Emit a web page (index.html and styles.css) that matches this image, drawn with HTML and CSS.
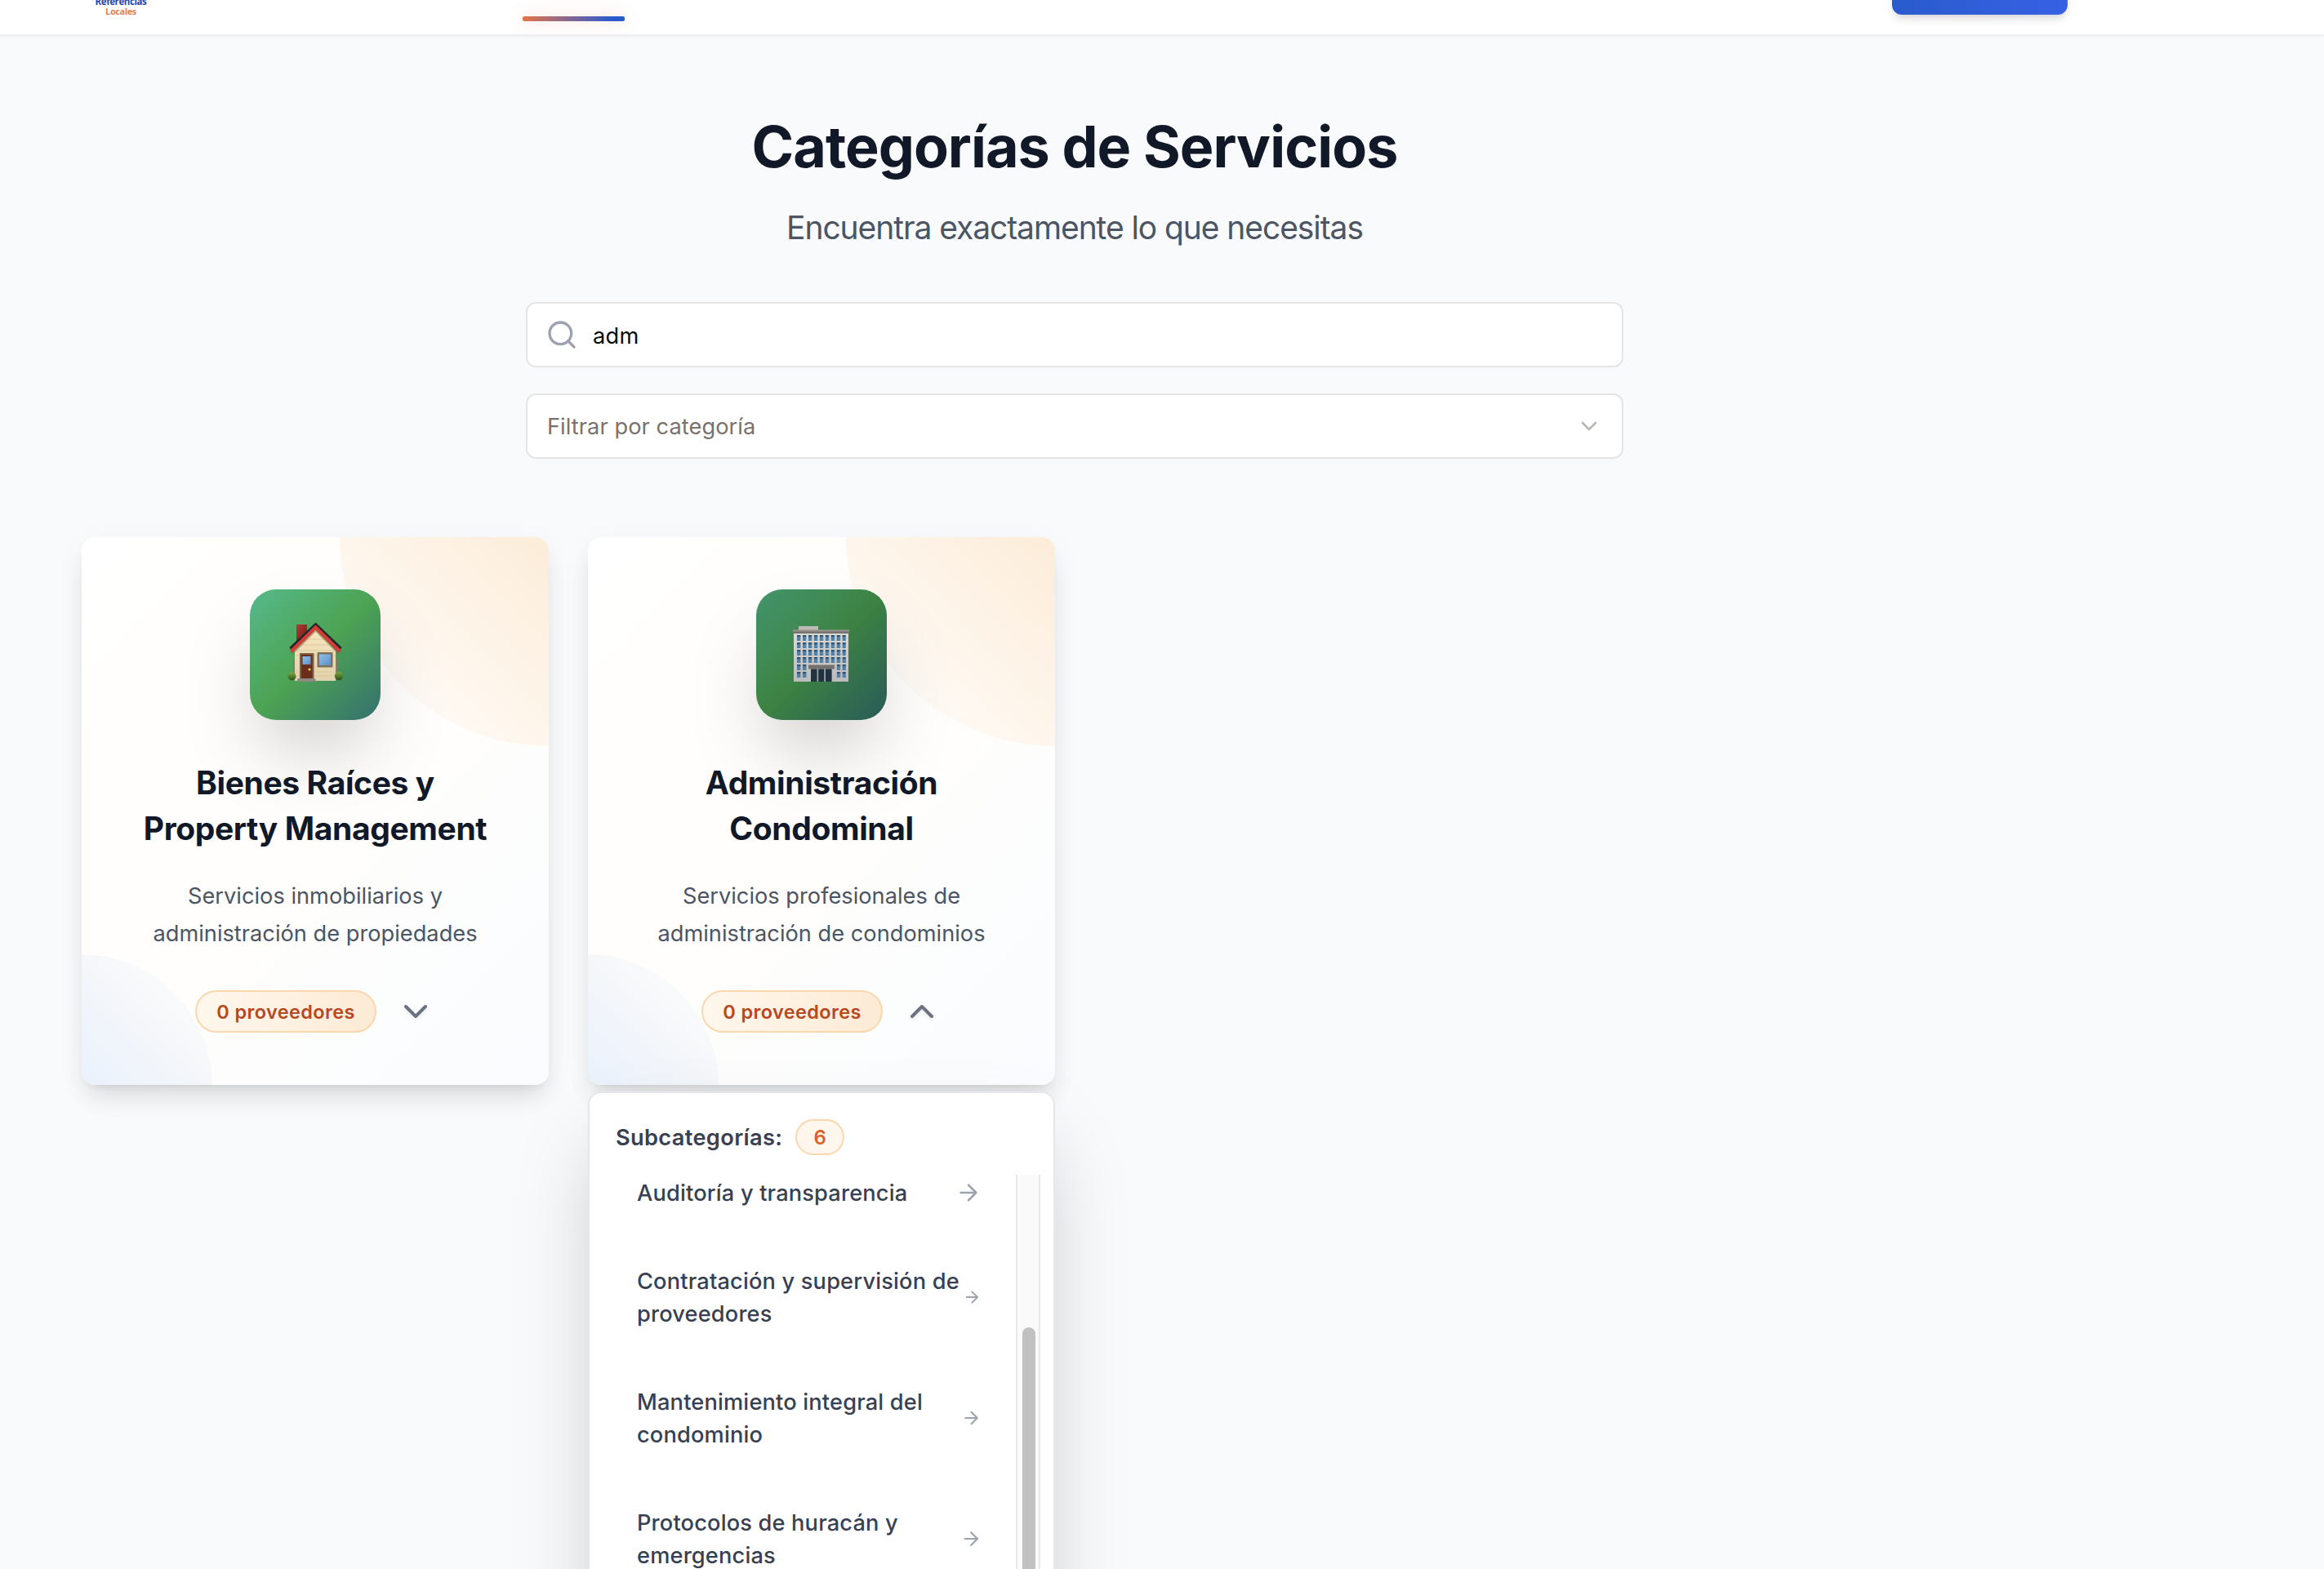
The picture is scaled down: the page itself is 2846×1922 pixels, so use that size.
FILE: index.html
```html
<!DOCTYPE html>
<html lang="es">
<head>
<meta charset="utf-8">
<title>Categorías de Servicios</title>
<link rel="stylesheet" href="styles.css">
</head>
<body>
<header class="topbar">
  <div class="logo"><span class="logo-main">Referencias</span><span class="logo-sub">Locales</span></div>
  <div class="nav-active"></div>
  <div class="cta"></div>
</header>
<main class="page">
  <h1 class="title">Categorías de Servicios</h1>
  <p class="subtitle">Encuentra exactamente lo que necesitas</p>
  <div class="filters">
    <div class="field">
      <svg class="search-icon" viewBox="0 0 24 24"><circle cx="11" cy="11" r="8"/><path d="m21 21-4.3-4.3"/></svg>
      <span class="query">adm</span>
    </div>
    <div class="field">
      <span class="placeholder">Filtrar por categoría</span>
      <svg class="select-icon" viewBox="0 0 24 24"><path d="m6 9 6 6 6-6"/></svg>
    </div>
  </div>
  <div class="grid">
    <article class="card">
      <div class="tile tile-light">
        <svg class="emoji" viewBox="0 0 72 72">
          <defs>
            <linearGradient id="wall" x1="0" y1="0" x2="0" y2="1"><stop offset="0" stop-color="#f8e6bd"/><stop offset="1" stop-color="#e0d2ae"/></linearGradient>
            <linearGradient id="brick" x1="0" y1="0" x2="1" y2="1"><stop offset="0" stop-color="#b03c32"/><stop offset="1" stop-color="#6e1c18"/></linearGradient>
            <linearGradient id="leaf" x1="0" y1="0" x2="0" y2="1"><stop offset="0" stop-color="#7fa83f"/><stop offset="1" stop-color="#2c5218"/></linearGradient>
            <linearGradient id="pane" x1="0" y1="0" x2="1" y2="1"><stop offset="0" stop-color="#8fc0ea"/><stop offset="1" stop-color="#5f8fc4"/></linearGradient>
          </defs>
          <rect x="13" y="2" width="13" height="21" rx="1" fill="url(#brick)"/>
          <rect x="9" y="44" width="3" height="18" fill="#8b7d63"/><rect x="60" y="44" width="3" height="18" fill="#8b7d63"/>
          <path d="M11 34 36 8l25 26v37H11z" fill="url(#wall)"/>
          <path d="M26 20h20M20 27h32M13 34h46M11 40h50M11 60h50M11 65h50" stroke="#d8c498" stroke-width=".8"/>
          <path d="m7 34 29.500-29.500L66 34" fill="none" stroke="#7d6b54" stroke-width="4" transform="translate(0 3.500)" opacity=".55"/>
          <path d="m6 32 30.500-29L67 32" fill="none" stroke="#20262b" stroke-width="5"/>
          <path d="m6.500 35 30-29.500L66.500 35" fill="none" stroke="#cf3f35" stroke-width="4.400"/>
          <rect x="17" y="37" width="17.500" height="32" fill="#7d6048"/><rect x="19" y="39" width="13.500" height="29" fill="#6b2e1d"/>
          <rect x="20.500" y="41" width="10" height="10" fill="url(#pane)"/><circle cx="29" cy="57" r="1.500" fill="#f2cf4f"/>
          <rect x="38.500" y="36" width="19" height="18.500" fill="#7f7058"/><rect x="41" y="38.500" width="14" height="13.500" fill="url(#pane)"/>
          <circle cx="7.500" cy="65.500" r="5" fill="url(#leaf)"/><circle cx="65" cy="65" r="5.200" fill="url(#leaf)"/>
          <path d="M15 68h20.500l2 4H13z" fill="#8d8985"/>
        </svg>
      </div>
      <h2 class="card-title">Bienes Raíces y<br>Property Management</h2>
      <p class="card-text">Servicios inmobiliarios y<br>administración de propiedades</p>
      <div class="card-foot"><span class="badge">0 proveedores</span>
        <svg class="chevron" viewBox="0 0 24 24"><path d="m6 9 6 6 6-6"/></svg></div>
    </article>
    <div class="column">
      <article class="card">
        <div class="tile tile-dark">
          <svg class="emoji" viewBox="0 0 72 72">
            <defs>
              <linearGradient id="stone" x1="0" y1="0" x2="0" y2="1"><stop offset="0" stop-color="#dddbd8"/><stop offset="1" stop-color="#b9bbbd"/></linearGradient>
              <linearGradient id="glass" x1="0" y1="0" x2="0" y2="1"><stop offset="0" stop-color="#23435f"/><stop offset=".5" stop-color="#5583a8"/><stop offset="1" stop-color="#4f7a9d"/></linearGradient>
              <linearGradient id="cornice" x1="0" y1="0" x2="0" y2="1"><stop offset="0" stop-color="#a09b96"/><stop offset="1" stop-color="#6b6560"/></linearGradient>
              <pattern id="windows" x="6" y="14" width="6.950" height="9" patternUnits="userSpaceOnUse"><rect width="4.400" height="7" fill="url(#glass)"/></pattern>
            </defs>
            <rect x="8" y="3" width="24" height="6" fill="#bdb9b5"/>
            <rect x="2" y="9" width="67" height="62" fill="url(#stone)"/>
            <rect x="1" y="7.500" width="69" height="4.500" fill="url(#cornice)"/>
            <rect x="6" y="14" width="60" height="35.500" fill="url(#windows)"/>
            <rect x="6" y="50" width="12" height="17" fill="url(#windows)"/><rect x="54.600" y="50" width="11.500" height="17" fill="url(#windows)"/>
            <rect x="20" y="50.500" width="32" height="5" fill="#77716c"/>
            <rect x="23" y="55.500" width="26" height="15.500" fill="#9ca4a8"/>
            <path d="M23 55.500h7.500V71H23zM32.200 55.500h7V71h-7zM41 55.500h7.500V71H41z" fill="#22323e"/>
          </svg>
        </div>
        <h2 class="card-title">Administración<br>Condominal</h2>
        <p class="card-text">Servicios profesionales de<br>administración de condominios</p>
        <div class="card-foot"><span class="badge">0 proveedores</span>
          <svg class="chevron" viewBox="0 0 24 24"><path d="m6 15 6-6 6 6"/></svg></div>
      </article>
      <section class="dropdown">
        <div class="drop-head"><span class="drop-title">Subcategorías:</span><span class="count">6</span></div>
        <div class="drop-body">
          <ul class="items">
            <li class="item single"><span>Auditoría y transparencia</span><svg class="arrow" viewBox="0 0 24 24"><path d="M5 12h14M12 5l7 7-7 7"/></svg></li>
            <li class="item"><span>Contratación y supervisión de<br>proveedores</span><svg class="arrow arrow-s" viewBox="0 0 24 24"><path d="M5 12h14M12 5l7 7-7 7"/></svg></li>
            <li class="item"><span>Mantenimiento integral del<br>condominio</span><svg class="arrow arrow-m" viewBox="0 0 24 24"><path d="M5 12h14M12 5l7 7-7 7"/></svg></li>
            <li class="item"><span>Protocolos de huracán y<br>emergencias</span><svg class="arrow arrow-l" viewBox="0 0 24 24"><path d="M5 12h14M12 5l7 7-7 7"/></svg></li>
          </ul>
          <div class="track"><div class="thumb"></div></div>
        </div>
      </section>
    </div>
  </div>
</main>
</body>
</html>
```
FILE: styles.css
```css
* { box-sizing: border-box; margin: 0; padding: 0; }
body {
  height: 1922px;
  overflow: hidden;
  display: flex;
  flex-direction: column;
  background: #f9fafc;
  color: #111827;
  font-family: Inter, "Liberation Sans", sans-serif;
}
svg { display: block; flex: none; fill: none; stroke-linecap: round; stroke-linejoin: round; }

.topbar {
  flex: none;
  height: 42px;
  display: flex;
  align-items: flex-end;
  padding: 0 314px 0 100px;
  background: #fff;
  box-shadow: 0 2px 0 #eff0f2, 0 2px 6px rgba(0, 0, 0, .06);
}
.logo {
  width: 96px;
  display: flex;
  flex-direction: column;
  align-items: center;
  margin-bottom: 22px;
  font: 700 11.500px/12px "Open Sans", sans-serif;
  letter-spacing: -.4px;
}
.logo-main { color: #2746ae; }
.logo-sub { color: #e0824f; font-size: 11px; }
.nav-active {
  width: 125px;
  height: 6px;
  margin: 0 auto 16px 444px;
  border-radius: 2px;
  background: linear-gradient(90deg, #e5744a, #2a5bcd 88%);
  box-shadow: 0 0 20px rgba(229, 92, 60, .25);
}
.cta {
  width: 215px;
  height: 80px;
  margin-bottom: 24px;
  border-radius: 12px;
  background: linear-gradient(90deg, #2a5bcd, #3761e4);
  box-shadow: 0 8px 12px -2px rgba(0, 0, 0, .1), 0 4px 8px -4px rgba(0, 0, 0, .12);
}

.page {
  flex: 1;
  min-height: 0;
  overflow: hidden;
  display: flex;
  flex-direction: column;
  margin-top: 2px;
  padding: 96px 314px 0 100px;
  white-space: nowrap;
}
.title { font-size: 70px; line-height: 80px; font-weight: 700; letter-spacing: -.97px; text-align: center; }
.subtitle { margin-top: 31px; font-size: 39px; line-height: 56px; color: #4b5563; letter-spacing: -1.080px; text-align: center; }
.filters { width: 1344px; margin: 63px auto 0; display: flex; flex-direction: column; gap: 32px; }
.field {
  height: 80px;
  flex: none;
  display: flex;
  align-items: center;
  padding: 0 24px;
  border: 2px solid #e7e5e4;
  border-radius: 12px;
  background: #fff;
  font-size: 27.200px;
}
.search-icon { width: 40px; height: 40px; margin: 0 18px 0 -2px; stroke: #9ca3af; stroke-width: 2; }
.query { color: #0a0a0a; padding-top: 2px; letter-spacing: .3px; }
.placeholder { color: #78716c; letter-spacing: .07px; }
.select-icon { width: 32px; height: 32px; margin-left: auto; stroke: #bab7b5; stroke-width: 2; }

.grid { margin-top: 96px; display: grid; grid-template-columns: repeat(4, 572px); gap: 48px; align-items: start; margin-bottom: -400px; }
.column { display: flex; flex-direction: column; gap: 8px; }
.card {
  height: 671px;
  display: flex;
  flex-direction: column;
  align-items: center;
  padding-top: 64px;
  border-radius: 16px;
  text-align: center;
  background: linear-gradient(135deg, #fff, #fffefc 25%, #fffefc 50%, #fafcff);
  box-shadow: 0 20px 30px -6px rgba(0, 0, 0, .1), 0 8px 12px -8px rgba(0, 0, 0, .1), 0 8px 40px rgba(0, 0, 0, .04);
  position: relative;
}
.card::before, .card::after { content: ""; position: absolute; z-index: 0; }
.card::before {
  top: 0; right: 0; width: 256px; height: 256px;
  border-radius: 0 16px 0 256px;
  background: linear-gradient(225deg, #fcecd9, #fef6ec 50%, #fefaf6 75%);
}
.card::after {
  bottom: 0; left: 0; width: 160px; height: 160px;
  border-radius: 0 160px 0 16px;
  background: linear-gradient(45deg, #eaf1fc, #f5f7fa 50%, #fafbfb 75%);
}
.card > * { position: relative; z-index: 1; flex: none; }
.tile {
  width: 160px;
  height: 160px;
  display: flex;
  align-items: center;
  justify-content: center;
  border-radius: 32px;
  box-shadow: 0 50px 100px -24px rgba(0, 0, 0, .25);
}
.tile-light { background: linear-gradient(135deg, #56b98b, #4da353 50%, #35706f); }
.tile-dark { background: linear-gradient(135deg, #43956d, #3d8243 50%, #295a59); }
.emoji { width: 72px; height: 72px; margin-top: -6px; stroke-linecap: butt; stroke-linejoin: miter; }
.tile-dark .emoji { margin-top: -4px; }
.card-title { margin-top: 49px; font-size: 39px; line-height: 56px; font-weight: 700; letter-spacing: -.38px; }
.card-text { margin-top: 32px; font-size: 27.200px; line-height: 45.500px; color: #4b5563; letter-spacing: .02px; }
.card-foot { margin-top: 47px; display: flex; align-items: center; gap: 24px; }
.badge {
  width: 222px;
  height: 52px;
  padding-top: 1px;
  border: 2px solid #fad7ac;
  border-radius: 26px;
  background: linear-gradient(90deg, #fff7ed, #fcebd5);
  color: #b8481e;
  font-size: 23.500px;
  line-height: 48px;
  font-weight: 600;
  letter-spacing: .38px;
}
.chevron { width: 48px; height: 48px; stroke: #6b7280; stroke-width: 2; filter: drop-shadow(0 2px 2px rgba(0, 0, 0, .08)); }

.dropdown {
  position: relative;
  z-index: 2;
  height: 700px;
  padding: 32px 16px 0 32px;
  border: 2px solid #e5e7eb;
  border-radius: 16px;
  background: #fff;
  box-shadow: 0 50px 100px -24px rgba(0, 0, 0, .25);
}
.drop-head { display: flex; align-items: center; gap: 16px; height: 44px; color: #374151; }
.drop-title { font-size: 27.200px; font-weight: 600; letter-spacing: .35px; }
.count {
  width: 60px;
  height: 44px;
  border: 2px solid #fad7ac;
  border-radius: 22px;
  background: #fff7ed;
  color: #dc5f28;
  font-size: 24px;
  line-height: 41px;
  font-weight: 600;
  text-align: center;
}
.drop-body { display: flex; justify-content: space-between; height: 600px; margin-top: 24px; }
.items { list-style: none; width: 448px; padding-left: 26px; font-size: 27.200px; line-height: 40px; font-weight: 500; color: #374151; letter-spacing: .18px; }
.item { display: flex; align-items: center; justify-content: space-between; height: 80px; margin-bottom: 68px; }
.item span { padding-top: 1px; }
.item.single { height: 44px; margin-bottom: 66px; }
.arrow { width: 32px; height: 32px; stroke: #9ca3af; stroke-width: 2; }
.arrow-s { width: 22.800px; margin-left: -20px; }
.arrow-m { width: 25px; }
.arrow-l { width: 26.500px; }
.track { width: 30px; border: solid #e8e8e8; border-width: 0 2px; background: #fafafa; padding: 187px 4px 0 6px; }
.thumb { width: 16px; height: 500px; border-radius: 8px; background: #c1c1c1; }
```
